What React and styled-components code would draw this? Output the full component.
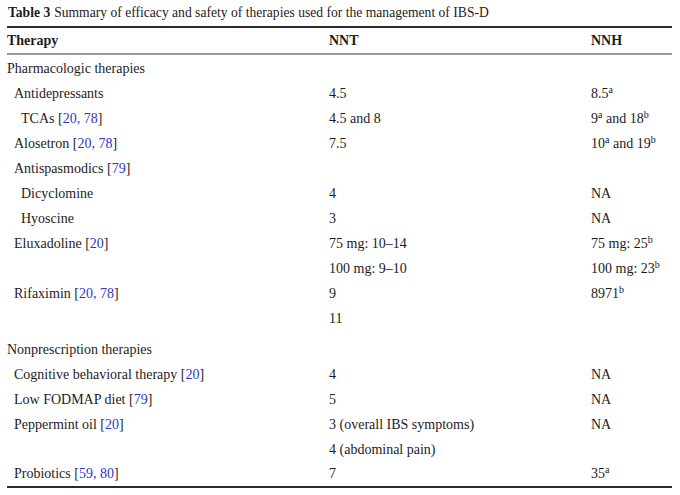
import styled, { createGlobalStyle } from 'styled-components';

const GlobalStyle = createGlobalStyle`
  html, body {
    margin: 0;
    padding: 0;
    background: #fff;
  }
  body {
    font-family: 'Liberation Serif', 'Times New Roman', serif;
    color: #1e1b1c;
  }
`;

const Page = styled.div`
  width: 680px;
  height: 495px;
  padding: 5px 8px 0 7px;
  box-sizing: border-box;
`;

const Caption = styled.div`
  font-size: 13.6px;
  line-height: 16px;
  padding-left: 1px;
  margin-bottom: 5px;

  b {
    font-weight: 700;
    margin-right: 4px;
  }
`;

const Table = styled.table`
  width: 100%;
  border-collapse: collapse;
  border-top: 2px solid #2b2b2b;
  border-bottom: 2px solid #2b2b2b;
  font-size: 14px;
`;

const HeadCell = styled.th`
  text-align: left;
  font-weight: 700;
  height: 25px;
  padding: 0;
  border-bottom: 2px solid #9a9a9a;
  vertical-align: middle;
`;

// section rows ("Pharmacologic therapies") sit a little lower than data rows
const Row = styled.tr`
  height: ${(p) => (p.$section ? (p.$first ? 27 : 31) : 25)}px;

  td {
    vertical-align: ${(p) => (p.$section ? 'bottom' : 'middle')};
    padding-bottom: ${(p) => (p.$section ? '3px' : '0')};
  }
`;

const Cell = styled.td`
  padding: 0;
  padding-left: ${(p) => (p.$level || 0) * 7}px;
  white-space: nowrap;
  line-height: 18px;
`;

const Ref = styled.span`
  color: #3434c8;
`;

const Sup = styled.sup`
  font-size: 10px;
  line-height: 0;
  vertical-align: 5px;
`;

const rows = [
  { section: true, first: true, name: 'Pharmacologic therapies' },
  { level: 1, name: 'Antidepressants', nnt: '4.5', nnh: <>8.5<Sup>a</Sup></> },
  { level: 2, name: 'TCAs', refs: '20, 78', nnt: '4.5 and 8', nnh: <>9<Sup>a</Sup> and 18<Sup>b</Sup></> },
  { level: 1, name: 'Alosetron', refs: '20, 78', nnt: '7.5', nnh: <>10<Sup>a</Sup> and 19<Sup>b</Sup></> },
  { level: 1, name: 'Antispasmodics', refs: '79' },
  { level: 2, name: 'Dicyclomine', nnt: '4', nnh: 'NA' },
  { level: 2, name: 'Hyoscine', nnt: '3', nnh: 'NA' },
  { level: 1, name: 'Eluxadoline', refs: '20', nnt: '75 mg: 10–14', nnh: <>75 mg: 25<Sup>b</Sup></> },
  { nnt: '100 mg: 9–10', nnh: <>100 mg: 23<Sup>b</Sup></> },
  { level: 1, name: 'Rifaximin', refs: '20, 78', nnt: '9', nnh: <>8971<Sup>b</Sup></> },
  { nnt: '11' },
  { section: true, name: 'Nonprescription therapies' },
  { level: 1, name: 'Cognitive behavioral therapy', refs: '20', nnt: '4', nnh: 'NA' },
  { level: 1, name: 'Low FODMAP diet', refs: '79', nnt: '5', nnh: 'NA' },
  { level: 1, name: 'Peppermint oil', refs: '20', nnt: '3 (overall IBS symptoms)', nnh: 'NA' },
  { nnt: '4 (abdominal pain)' },
  { level: 1, name: 'Probiotics', refs: '59, 80', nnt: '7', nnh: <>35<Sup>a</Sup></> },
];

export default function App() {
  return (
    <Page>
      <GlobalStyle />
      <Caption>
        <b>Table 3</b>Summary of efficacy and safety of therapies used for the management of IBS-D
      </Caption>
      <Table>
        <colgroup>
          <col style={{ width: 322 }} />
          <col style={{ width: 262 }} />
          <col />
        </colgroup>
        <thead>
          <tr>
            <HeadCell>Therapy</HeadCell>
            <HeadCell>NNT</HeadCell>
            <HeadCell>NNH</HeadCell>
          </tr>
        </thead>
        <tbody>
          {rows.map((r, i) => (
            <Row key={i} $section={r.section} $first={r.first}>
              <Cell $level={r.level}>
                {r.name}
                {r.refs && (
                  <>
                    {' '}[<Ref>{r.refs}</Ref>]
                  </>
                )}
              </Cell>
              <Cell>{r.nnt}</Cell>
              <Cell>{r.nnh}</Cell>
            </Row>
          ))}
        </tbody>
      </Table>
    </Page>
  );
}
